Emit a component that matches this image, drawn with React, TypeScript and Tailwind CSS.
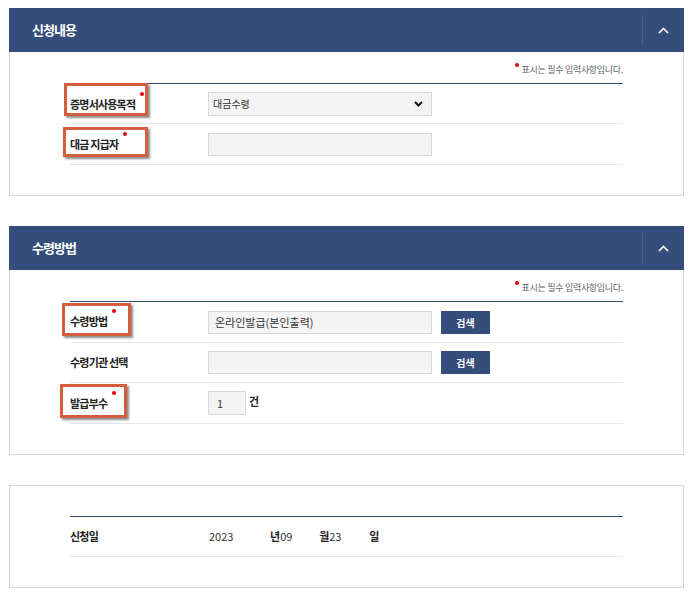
import React from 'react';

const FONT = "font-['Noto_Sans_CJK_KR','Noto_Sans',sans-serif]";

const SectionHeader: React.FC<{ title: string }> = ({ title }) => (
  <div className="flex h-[44px] items-center bg-[#344d7a] pl-[23px]">
    <h2 className="flex-1 text-[13px] font-bold tracking-[-1px] text-white">{title}</h2>
    <div className="h-[30px] w-px bg-[#4b6290]" />
    <button className="flex h-full w-[41px] items-center justify-center">
      <svg width="11" height="7" viewBox="0 0 11 7">
        <polyline points="1,6 5.5,1.5 10,6" fill="none" stroke="white" strokeWidth="1.6" />
      </svg>
    </button>
  </div>
);

const Notice = () => (
  <div className="flex h-[31px] items-center justify-end pt-[4px] text-[9px] tracking-[-0.3px] text-[#666]">
    <span className="mr-[3px] -mt-[9px] h-[4px] w-[4px] rounded-full bg-[#e60012]" />
    표시는 필수 입력사항입니다.
  </div>
);

const Dot = () => <span className="ml-[5px] -mt-[7px] h-[4px] w-[4px] shrink-0 rounded-full bg-[#e60012]" />;

const LabelText: React.FC<{ text: string; required?: boolean }> = ({ text, required }) => (
  <span className="inline-flex items-start">
    <span className="whitespace-pre text-[11px] font-bold leading-none tracking-[-0.8px] text-[#222]">{text}</span>
    {required && <Dot />}
  </span>
);

const Row: React.FC<{ label: React.ReactNode; children?: React.ReactNode; h: string }> = ({ label, children, h }) => (
  <div className={`flex border-b border-[#e8e8e8] ${h}`}>
    <div className="flex w-[138px] shrink-0">{label}</div>
    <div className="flex flex-1 items-center">{children}</div>
  </div>
);

const Field: React.FC<{ children?: React.ReactNode }> = ({ children }) => (
  <div className="flex h-[23px] w-[224px] items-center border border-[#d9d9d9] bg-[#f4f4f4] px-[6px] text-[11px] text-[#333]">
    {children}
  </div>
);

const SearchButton = () => (
  <button className="ml-[9px] h-[23px] w-[49px] bg-[#344d7a] text-[10px] font-bold text-white">검색</button>
);

export default function App() {
  return (
    <div className={`${FONT} min-h-[594px] bg-white pt-[8px] pl-[9px] pr-[6px]`}>
      {/* 신청내용 */}
      <section>
        <SectionHeader title="신청내용" />
        <div className="border-x border-b border-[#d5d5d5] px-[60px] pb-[30px]">
          <Notice />
          <div className="border-t border-[#344d7a]">
            <Row
              h="h-[40px]"
              label={
                <div className="-ml-[6px] -mt-[1px] flex h-[33px] w-[84px] items-center border-[3px] border-[#d35f3f] pl-[3px] pt-[9px] shadow-[2px_2px_2px_rgba(0,0,0,0.45)]">
                  <LabelText text="증명서사용목적" required />
                </div>
              }
            >
              <div className="flex h-[24px] w-[224px] items-center justify-between border border-[#d9d9d9] bg-[#f4f4f4] pl-[4px] pr-[8px] text-[10px] text-[#333]">
                <span>대금수령</span>
                <svg width="9" height="6" viewBox="0 0 9 6">
                  <polyline points="1,1 4.5,4.5 8,1" fill="none" stroke="#111" strokeWidth="2" />
                </svg>
              </div>
            </Row>
            <Row
              h="h-[41px]"
              label={
                <div className="-ml-[7px] mt-[3px] flex h-[30px] w-[85px] items-center border-[3px] border-[#d35f3f] pl-[4px] pt-[4px] shadow-[2px_2px_2px_rgba(0,0,0,0.45)]">
                  <LabelText text="대금 지급자" required />
                </div>
              }
            >
              <Field />
            </Row>
          </div>
        </div>
      </section>

      {/* 수령방법 */}
      <section className="mt-[30px]">
        <SectionHeader title="수령방법" />
        <div className="border-x border-b border-[#d5d5d5] px-[60px] pb-[30px]">
          <Notice />
          <div className="border-t border-[#344d7a]">
            <Row
              h="h-[41px]"
              label={
                <div className="-ml-[8px] mt-[1px] flex h-[33px] w-[69px] items-center border-[3px] border-[#d35f3f] pl-[5px] pt-[3px] shadow-[2px_2px_2px_rgba(0,0,0,0.45)]">
                  <LabelText text="수령방법" required />
                </div>
              }
            >
              <Field>온라인발급(본인출력)</Field>
              <SearchButton />
            </Row>
            <Row
              h="h-[40px]"
              label={
                <div className="flex items-center">
                  <LabelText text="수령기관 선택" />
                </div>
              }
            >
              <Field />
              <SearchButton />
            </Row>
            <Row
              h="h-[41px]"
              label={
                <div className="-ml-[10px] mt-[1px] flex h-[34px] w-[67px] items-center border-[3px] border-[#d35f3f] pl-[7px] pt-[5px] shadow-[2px_2px_2px_rgba(0,0,0,0.45)]">
                  <LabelText text="발급부수" required />
                </div>
              }
            >
              <div className="flex h-[24px] w-[38px] items-center border border-[#d9d9d9] bg-[#f4f4f4] pl-[8px] text-[11px] text-[#333]">
                1
              </div>
              <span className="-mt-[4px] ml-[3px] text-[11px] font-bold text-[#222]">건</span>
            </Row>
          </div>
        </div>
      </section>

      {/* 신청일 */}
      <section className="mt-[30px]">
        <div className="border border-[#d5d5d5] px-[60px] pb-[30px] pt-[30px]">
          <div className="border-t border-[#344d7a]">
            <Row
              h="h-[40px]"
              label={
                <div className="flex items-center">
                  <LabelText text="신청일" />
                </div>
              }
            >
              <div className="flex items-center text-[11px] text-[#333]">
                <span className="w-[62px] pl-[1px]">2023</span>
                <span className="font-bold text-[#222]">년</span>
                <span className="w-[39px]">09</span>
                <span className="font-bold text-[#222]">월</span>
                <span className="w-[40px]">23</span>
                <span className="font-bold text-[#222]">일</span>
              </div>
            </Row>
          </div>
        </div>
      </section>
    </div>
  );
}
